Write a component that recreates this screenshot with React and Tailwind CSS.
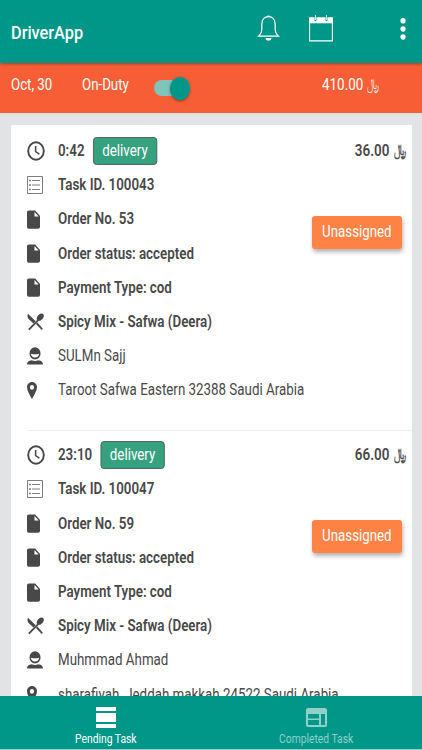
const tasks = [
  {
    time: '0:42',
    type: 'delivery',
    price: '36.00',
    taskId: '100043',
    orderNo: '53',
    status: 'accepted',
    payment: 'cod',
    store: 'Spicy Mix - Safwa (Deera)',
    customer: 'SULMn Sajj',
    address: 'Taroot Safwa Eastern 32388 Saudi Arabia'
  },
  {
    time: '23:10',
    type: 'delivery',
    price: '66.00',
    taskId: '100047',
    orderNo: '59',
    status: 'accepted',
    payment: 'cod',
    store: 'Spicy Mix - Safwa (Deera)',
    customer: 'Muhmmad Ahmad',
    address: 'sharafiyah, Jeddah makkah 24522 Saudi Arabia'
  }
];

const ClockIcon = () => (
  <svg className="w-[18px] h-5" viewBox="0 0 18 20" fill="none" stroke="currentColor">
    <ellipse cx="9" cy="10" rx="7.8" ry="8.7" strokeWidth="1.9" />
    <path d="M8.6 5v5.6l3.8 2.6" strokeWidth="1.5" />
  </svg>
);

const ListIcon = () => (
  <svg className="w-4 h-[18px]" viewBox="0 0 16 18" fill="none" stroke="currentColor">
    <path d="M.5.5h15v17H.5z" opacity=".7" />
    <path d="M5 4.500h8M5 9h8M5 13.500h8" opacity=".7" />
    <path d="M2.300 4.500h1.400M2.300 9h1.400M2.300 13.500h1.400" strokeWidth="1.4" />
  </svg>
);

const FileIcon = () => (
  <svg className="w-[13px] h-[19px]" viewBox="0 0 13 19" fill="currentColor">
    <path d="M1.9.4h6.300L13 6v11a1.800 1.800 0 0 1-1.800 1.800H1.800A1.800 1.800 0 0 1 0 17V2.300A1.900 1.900 0 0 1 1.900.4z" />
    <path d="M7.500 1.900v4.700h4.100z" fill="#fff" />
  </svg>
);

const CutleryIcon = () => (
  <svg className="w-[17px] h-[18px]" viewBox="0 0 17 18" fill="currentColor">
    <path d="M1 .8 8.600 8.200 6.500 10.500 1.900 6.300C.3 4.700.1 2.600 1 .8z" />
    <path d="M10.300 9.600 15.900 15.700 14.700 17 8.900 11z" />
    <path d="M10.800 6.200 12 7.400 2.500 17.200 1.200 15.900z" />
    <path d="M10.300 7.600C9 5.800 10 3.500 11.500 2c1.700-1.600 3.800-1.900 4.800-.8 1 1.100.6 3.300-.9 4.900-1.400 1.600-3.700 2.500-5.100 1.500z" />
  </svg>
);

const PersonIcon = () => (
  <svg className="w-4 h-[18px]" viewBox="0 0 16 18" fill="currentColor">
    <ellipse cx="8" cy="6.4" rx="5.5" ry="6.1" />
    <path d="M3.900 6.700c2.600.8 5.600.8 8.200 0-.1 2.400-1.800 3.800-4.100 3.800S4 9.100 3.900 6.700z" fill="#fff" />
    <path d="M0 17.600c0-2.700 1.800-3.900 4.700-4.300 1.900 1 4.700 1 6.600 0 2.900.4 4.700 1.600 4.700 4.300z" />
  </svg>
);

const PinIcon = () => (
  <svg className="w-2.5 h-[17px]" viewBox="0 0 10 17">
    <path
      fillRule="evenodd"
      fill="currentColor"
      d="M5 0c2.800 0 5 2.300 5 5.300C10 9 5 17 5 17S0 9 0 5.300C0 2.300 2.200 0 5 0zm0 3a2.100 2.400 0 1 0 0 4.800A2.100 2.400 0 0 0 5 3z"
    />
  </svg>
);

const BellIcon = () => (
  <svg className="w-[23px] h-[27px]" viewBox="0 0 23 27" fill="none" stroke="#fff" strokeWidth="1.2">
    <path d="M11.500 1.700C7.300 1.700 4.800 5 4.800 9.500v4.600c0 3.300-1 5.200-3.300 7.100h20c-2.300-1.900-3.300-3.800-3.300-7.100V9.500c0-4.500-2.500-7.800-6.700-7.800z" />
    <path d="M10.100 1.800c0-1.700 2.800-1.700 2.800 0M8.400 23h6.200c-.3 3.400-5.900 3.400-6.200 0z" fill="#fff" stroke="none" />
  </svg>
);

const CalendarIcon = () => (
  <svg className="w-6 h-[27px]" viewBox="0 0 24 27">
    <path d="M.6 3h22.800v22.900H.6z" fill="none" stroke="#fff" strokeWidth="1.1" />
    <path d="M0 2.500h24v5.800H0z" fill="#fff" />
    <path d="M6.500 2v4M17.500 2v4" stroke="#009788" strokeWidth="1.8" />
    <path d="M6.500 0v5M17.500 0v5" stroke="#fff" strokeWidth=".8" />
  </svg>
);

const Riyal = () => (
  <span className="-mt-[3px] flex w-[14px] justify-center font-['DejaVu_Sans'] text-[15px] leading-5 opacity-95">
    <span className="scale-x-[0.87]">﷼</span>
  </span>
);

const Row = ({ icon, bold, children }) => (
  <div className="flex items-center h-[34.2px]">
    <div className="w-[31px] shrink-0">{icon}</div>
    <div className={`flex items-center origin-left scale-x-[0.834] whitespace-nowrap ${bold ? 'font-semibold' : ''}`}>
      {children}
    </div>
  </div>
);

const Task = ({ task }) => (
  <div className="relative h-[304.2px] pl-4 pt-[9px]">
    <Row icon={<ClockIcon />} bold>
      <span>{task.time}</span>
      <span className="-mt-px ml-[10px] h-7 w-[77px] rounded-[4px] border border-[#4b5d55] bg-[#36a17e] text-center font-normal leading-[26px] text-white">
        {task.type}
      </span>
    </Row>
    <Row icon={<ListIcon />} bold>Task ID. {task.taskId}</Row>
    <Row icon={<FileIcon />} bold>Order No. {task.orderNo}</Row>
    <Row icon={<FileIcon />} bold>Order status: {task.status}</Row>
    <Row icon={<FileIcon />} bold>Payment Type: {task.payment}</Row>
    <Row icon={<CutleryIcon />} bold>{task.store}</Row>
    <Row icon={<PersonIcon />}>{task.customer}</Row>
    <Row icon={<PinIcon />}>{task.address}</Row>

    <div className="absolute right-[6px] top-[14px] flex items-center gap-[6px] origin-right scale-x-[0.84] font-semibold">
      {task.price} <Riyal />
    </div>
    <button className="absolute right-[10px] top-[91px] h-[33px] w-[90px] rounded-[3px] bg-[#ff8345] pb-[2px] text-white shadow-[1px_3px_4px_rgba(0,0,0,0.3)]">
      <span className="-mx-4 inline-block scale-x-[0.83]">Unassigned</span>
    </button>
  </div>
);

const App = () => {
  return (
    <div className="flex h-[750px] w-[422px] flex-col overflow-hidden bg-[#e2e3e5] font-['Roboto',sans-serif] text-base leading-6 text-[#484848]">
      {/* Toolbar */}
      <header className="z-10 flex h-[63px] shrink-0 items-start bg-[#009788] pl-[11px] text-white shadow-[0_1px_3px_rgba(0,0,0,0.35)]">
        <h1 className="mt-[19px] w-[246px] text-lg leading-7 font-medium">
          <span className="inline-block origin-left scale-x-[0.906]">DriverApp</span>
        </h1>
        <div className="mt-[15px]"><BellIcon /></div>
        <div className="ml-[29px] mt-[15px]"><CalendarIcon /></div>
        <svg className="ml-[67px] mt-[17px] h-6 w-[6px]" viewBox="0 0 6 24" fill="#fff">
          <ellipse cx="3" cy="3.7" rx="2.6" ry="2.8" />
          <ellipse cx="3" cy="12" rx="2.6" ry="2.8" />
          <ellipse cx="3" cy="20" rx="2.6" ry="2.8" />
        </svg>
      </header>

      {/* Duty bar */}
      <section className="flex h-[50px] shrink-0 bg-[#f75e35] pl-[11px] pt-[10px] text-white">
        <div className="w-[71px]"><span className="inline-block origin-left scale-x-[0.83]">Oct, 30</span></div>
        <div className="w-[72px]"><span className="inline-block origin-left scale-x-[0.83]">On-Duty</span></div>
        <div className="relative mt-[7px] h-4 w-9 rounded-full bg-[#7fc4bb]">
          <div className="absolute right-0 -top-[3.5px] h-[23px] w-5 rounded-[50%] bg-[#009788] shadow-[0_1px_3px_rgba(0,0,0,0.4)]" />
        </div>
        <div className="ml-[132px] flex origin-left scale-x-[0.84] items-center gap-[5px] self-start">
          410.00 <Riyal />
        </div>
      </section>

      {/* Pending tasks */}
      <main className="mt-3 ml-[11px] mr-[10px] min-h-0 flex-1 overflow-hidden bg-white">
        {tasks.map((task, index) => (
          <div key={task.taskId}>
            {index > 0 && <div className="ml-4 mt-[0.8px] -mb-[1.8px] h-px bg-[#f0f0f0]" />}
            <Task task={task} />
          </div>
        ))}
      </main>

      {/* Tabs */}
      <nav className="flex h-[54px] shrink-0 border-b border-[#8fd0c8] bg-[#009788] text-xs text-white">
        <div className="flex w-1/2 flex-col items-center pt-[11px]">
          <svg className="h-[21px] w-5" viewBox="0 0 20 21" fill="#fff">
            <path d="M0 0h20v4H0zM0 6h20v9H0zM0 17h20v4H0z" />
          </svg>
          <span className="mt-[3px] scale-x-[0.86] leading-4">Pending Task</span>
        </div>
        <div className="flex w-1/2 flex-col items-center pt-[12px] text-[#8fd0c8]">
          <svg className="h-[19px] w-[21px]" viewBox="0 0 21 19" fill="currentColor">
            <path
              fillRule="evenodd"
              d="M2 0h17a2 2 0 0 1 2 2v15a2 2 0 0 1-2 2H2a2 2 0 0 1-2-2V2a2 2 0 0 1 2-2zM2 6v4.500h11V6zM2 12v5h11v-5zM15 6v11h4V6z"
            />
          </svg>
          <span className="mt-1 scale-x-[0.86] leading-4">Completed Task</span>
        </div>
      </nav>
    </div>
  );
};

export default App;
